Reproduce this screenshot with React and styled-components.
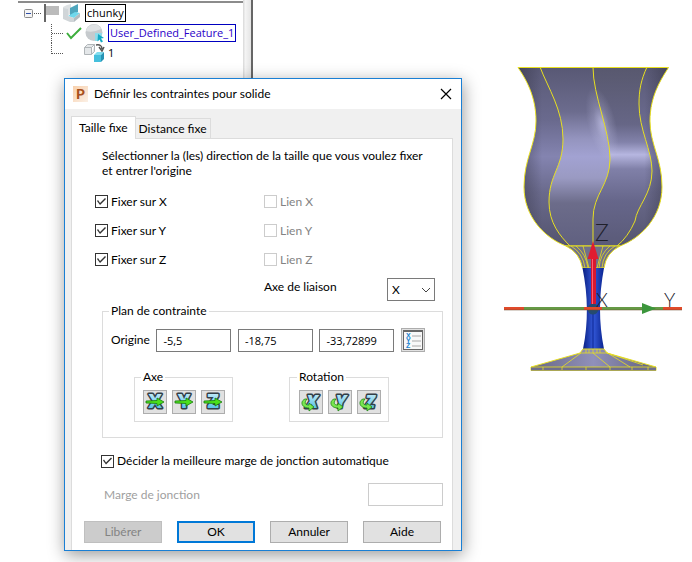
import React, { useState } from "react";
import styled, { createGlobalStyle } from "styled-components";

const GlobalStyle = createGlobalStyle`
  * {
    box-sizing: border-box;
  }
  body {
    margin: 0;
    background: #ffffff;
    color: #000000;
    font-family: Lato, "Open Sans", sans-serif;
    font-size: 12px;
    line-height: 16px;
  }
  button, input, select {
    font: inherit;
    color: inherit;
    margin: 0;
    border-radius: 0;
  }
  svg {
    flex: none;
  }
`;

const Desktop = styled.main`
  position: relative;
  display: flex;
  justify-content: space-between;
  align-items: flex-start;
  min-height: 100vh;
  overflow: hidden;
`;

/* ---------- tree ---------- */

const TreePane = styled.aside`
  display: flex;
  height: 100px;
  padding-left: 18px;
`;

const Tree = styled.ul`
  width: 225px;
  margin: 1px 0 0;
  padding: 0 0 0 6px;
  border-top: 2px solid #8c8c8c;
  font-family: "Open Sans", sans-serif;
  font-size: 11px;
  list-style: none;
`;

const TreeRow = styled.li`
  display: flex;
  align-items: center;
  height: 20px;
`;

const TreeLabel = styled.span`
  height: 18px;
  padding: 0 1px;
  margin-left: ${(props) => props.$gap || 4}px;
  border: 1px solid ${(props) => props.$color || "transparent"};
  color: ${(props) => props.$text || "#000000"};
  white-space: nowrap;
`;

const Splitter = styled.div`
  width: 10px;
  background: linear-gradient(90deg, #d8d8d8, #f4f4f4 30%, #e4e4e4);
  border-right: 2px solid #666666;
`;

/* ---------- dialog ---------- */

const Dialog = styled.section`
  position: absolute;
  left: 64px;
  top: 78px;
  width: 398px;
  background: #f0f0f0;
  border: 1px solid #1a7fd4;
  box-shadow: 1px 4px 16px rgba(0, 0, 0, 0.4);
`;

const TitleBar = styled.header`
  display: flex;
  align-items: center;
  height: 30px;
  padding: 0 9px 0 8px;
  background: #ffffff;
`;

const Title = styled.h1`
  flex: 1;
  margin: 0 0 0 6px;
  font-size: 12px;
  font-weight: 400;
`;

const CloseButton = styled.button`
  display: flex;
  padding: 0;
  border: none;
  background: none;
`;

const TabList = styled.div`
  display: flex;
  align-items: flex-end;
  padding: 7px 6px 0;
`;

const Tab = styled.button`
  height: ${(props) => (props.$active ? 23 : 20)}px;
  margin-bottom: ${(props) => (props.$active ? -1 : 0)}px;
  padding: ${(props) => (props.$active ? "0 7px" : "0 3px")};
  border: 1px solid #dcdcdc;
  border-bottom: none;
  border-left-width: ${(props) => (props.$active ? 1 : 0)}px;
  background: ${(props) => (props.$active ? "#ffffff" : "#f0f0f0")};
  white-space: nowrap;
`;

const Panel = styled.div`
  margin: 0 8px 0 6px;
  padding: 9px 9px 7px 30px;
  border: 1px solid #dcdcdc;
  border-bottom: none;
  background: #ffffff;
`;

const Intro = styled.p`
  margin: 0 0 9px;
  line-height: 15px;
  white-space: nowrap;
`;

const CheckGrid = styled.div`
  display: grid;
  grid-template-columns: 169px 1fr;
  grid-auto-rows: 29px;
  align-items: center;
  margin-left: -7px;
`;

const CheckLabel = styled.label`
  display: flex;
  align-items: center;
  gap: 3px;
  color: ${(props) => (props.$disabled ? "#838383" : "#000000")};
  white-space: nowrap;
`;

const CheckBox = styled.input`
  appearance: none;
  width: 13px;
  height: 13px;
  border: 1px solid #333333;
  background: #ffffff;

  &:checked::after {
    content: "";
    display: block;
    width: 11px;
    height: 11px;
    background: #333333;
    clip-path: polygon(1px 5px, 2px 4px, 4px 7px, 9px 2px, 10px 3px, 4px 9px);
  }
  &:disabled {
    border-color: #cccccc;
  }
`;

const LinkRow = styled.div`
  display: flex;
  justify-content: space-between;
  align-items: flex-start;
  margin: 4px 8px 2px 162px;
`;

const LinkLabel = styled.label`
  line-height: 18px;
`;

const SelectBox = styled.div`
  position: relative;
  display: flex;

  svg {
    position: absolute;
    right: 4px;
    top: 9px;
    pointer-events: none;
  }
`;

const Select = styled.select`
  appearance: none;
  width: 48px;
  height: 23px;
  padding: 0 4px;
  border: 1px solid #7a7a7a;
  background: #ffffff;
`;

const Group = styled.fieldset`
  min-width: 0;
  margin: 0;
  padding: ${(props) => props.$pad};
  border: 1px solid #dcdcdc;
`;

const Legend = styled.legend`
  margin-left: ${(props) => props.$indent || 0}px;
  padding: 0 2px;
`;

const OriginRow = styled.div`
  display: flex;
  align-items: center;
  justify-content: space-between;
`;

const TextInput = styled.input`
  width: 75px;
  height: 23px;
  padding: 0 6px;
  border: 1px solid #7a7a7a;
  background: #ffffff;
  font-family: "Open Sans", sans-serif;
  font-size: 11px;

  &:disabled {
    border-color: #cccccc;
  }
`;

const IconButton = styled.button`
  display: flex;
  align-items: center;
  justify-content: center;
  width: 24px;
  height: 24px;
  padding: 0;
  border: 1px solid #adadad;
  background: #e1e1e1;
`;

const GroupRow = styled.div`
  display: flex;
  justify-content: space-between;
  padding: 17px 36px 0 23px;
`;

const ButtonSet = styled.div`
  display: flex;
  gap: 5px;
`;

const AutoMargin = styled.div`
  margin: 15px 0 14px -1px;
`;

const MarginRow = styled.div`
  display: flex;
  align-items: center;
  justify-content: space-between;
  padding-left: 2px;
  color: #a0a0a0;
`;

const Footer = styled.footer`
  display: flex;
  gap: 15px;
  margin: 15px 0 0 -18px;
`;

const PushButton = styled.button`
  width: 78px;
  height: 22px;
  padding: 0;
  border: ${(props) => (props.$primary ? "2px solid #0078d7" : "1px solid #adadad")};
  background: #e1e1e1;

  &:disabled {
    border-color: #bfbfbf;
    background: #cccccc;
    color: #838383;
  }
`;

/* ---------- 3D view ---------- */

const Viewport = styled.div`
  display: flex;
  justify-content: flex-end;
  flex: 1;
  padding-top: 60px;
`;

/* ---------- tree icons ---------- */

const dots = { stroke: "#555555", strokeDasharray: "1 1" };

const RootBranch = () => (
  <svg width="57" height="20">
    <rect x="0.5" y="6.5" width="8" height="8" rx="1" fill="#f4f4f4" stroke="#8a8a8a" />
    <path d="M2 10.5h5" stroke="#2f4fa8" />
    <path d="M10 10.5h8" {...dots} />
    <path d="M20 1h2v18h-2z" fill="#666666" />
    <path d="M22 3h13v9h-13z" fill="#bbbbbb" />
    <path d="M39 4l4-2 4-1v9l-3 3-5 2z" fill="#dde1e3" />
    <path d="M46 5l8-4v8l-8 4z" fill="#4fa6bd" />
    <path d="M44 13l7-4 5 1-6 5z" fill="#6fd8ec" />
    <path d="M39 5l5 1v7l6 2v4h-4l-7-3z" fill="#d0d5d8" />
    <path d="M50 15l6-5v4l-6 5z" fill="#b4bcc0" />
  </svg>
);

const FeatureBranch = () => (
  <svg width="80" height="20">
    <path d="M27.5 1v19M28 10.5h12" {...dots} fill="none" />
    <path d="M43 10l4 5L57 5" fill="none" stroke="#3dae3d" strokeWidth="2" />
    <circle cx="70" cy="9.5" r="8.5" fill="#c6cacd" />
    <path d="M62 8a8 8 0 0 1 15-2q-8 4-15 2z" fill="#dfe2e4" />
    <path d="M71 10h7l-1 5-3 3h-3z" fill="#8fdcea" />
    <path d="M74 11l6 4-3 .5 2 3-2 1-1.5-3-2 2z" fill="#12a9c4" />
  </svg>
);

const CopyBranch = () => (
  <svg width="81" height="20">
    <path d="M27.5 0v11M28 10.5h12" {...dots} fill="none" />
    <path d="M60.5 4.5h7v7h-7zM60.5 4.5l3-3h7l-3 3M67.5 11.5l3-3v-7" fill="#e4e7e9" stroke="#b0b5b8" />
    <path d="M72 2q6-1 6 4M75 4l3 4 2-4" fill="none" stroke="#555555" strokeWidth="1.5" />
    <path d="M70 12l3-3h7l-3 3z" fill="#7fdcee" />
    <path d="M70 12h7v7h-7z" fill="#45bfdc" />
    <path d="M77 12l3-3v7l-3 3z" fill="#2793b4" />
  </svg>
);

/* ---------- dialog icons ---------- */

const AppIcon = () => (
  <svg width="15" height="16">
    <defs>
      <linearGradient id="logo" x2="1" y2="1">
        <stop offset="0" stopColor="#f8d0ac" />
        <stop offset="1" stopColor="#fbf0e6" />
      </linearGradient>
    </defs>
    <rect width="15" height="16" fill="url(#logo)" />
    <text x="3" y="13" fontFamily="Lato" fontWeight="900" fontSize="14" fill="#a8501c">
      P
    </text>
  </svg>
);

const letterStyle = {
  fontFamily: "Open Sans",
  fontWeight: 800,
  fontSize: 19,
  textAnchor: "middle",
  fill: "url(#ice)",
  stroke: "#333f48",
  strokeWidth: 3,
  strokeLinejoin: "round",
  paintOrder: "stroke",
};

const AxisIcon = ({ axis }) => (
  <svg width="22" height="22" overflow="visible">
    <text x="11" y="17" {...letterStyle}>
      {axis}
    </text>
    <path d="M2 10l11-.5V7l7 4-7 4v-2.500L2 12z" fill="#4be01c" stroke="#16780c" strokeWidth="0.8" />
  </svg>
);

const RotationIcon = ({ axis }) => (
  <svg width="22" height="22" overflow="visible">
    <text x="12" y="17" {...letterStyle} fontSize="18" fontStyle="italic">
      {axis}
    </text>
    <path
      d="M5 8c-5 2-4 9 4 9v3l5-4-5-4v2c-4 0-5-2-2-6z"
      fill="#7be650"
      stroke="#1c8412"
      strokeWidth="0.8"
    />
  </svg>
);

const CoordinatesIcon = () => (
  <svg width="22" height="22">
    <rect x="1.5" y="1.5" width="19" height="19" fill="#f8f8f8" stroke="#666666" />
    <path d="M1 1h20v2H1z" fill="#666666" />
    <path d="M10 7h9M10 12h9M10 17h9" stroke="#d0d0d0" strokeWidth="2" />
    <g fontFamily="Liberation Sans" fontWeight="700" fontSize="7" fill="#1a84d0">
      <text x="4" y="9">X</text>
      <text x="4" y="14">Y</text>
      <text x="4" y="19">Z</text>
    </g>
  </svg>
);

/* ---------- glass ---------- */

const bowl =
  "M518 67.5C525 78 536 95 536 121C536 145 524 158 524 187C524 217 545 238 566 246H620C641 238 662 217 662 187C662 158 650 145 650 121C650 95 662 78 668.5 67.5Z";
const seamLeft = "C548 88 563 110 563 139C563 168 549 174 549 202C549 223 560 236 570 246";
const seamMid = "C593 96 610 130 610 159C610 185 593 194 593 219V246";
const seamRight = "C641 80 639 90 639 104C639 130 652 150 652 171C652 194 637 206 635 221Q628 237 617 246";

const Glass = () => (
  <svg width="196" height="320" viewBox="496 60 196 320">
    <defs>
      <linearGradient id="ice" x2="0" y2="1">
        <stop offset="0" stopColor="#e4f8ff" />
        <stop offset="1" stopColor="#2fb4e0" />
      </linearGradient>
      <linearGradient id="side" gradientUnits="userSpaceOnUse" x1="0" x2="0" y1="67" y2="246">
        <stop offset="0" stopColor="#5a5a76" />
        <stop offset="0.3" stopColor="#6a6a8e" />
        <stop offset="0.5" stopColor="#8484b0" />
        <stop offset="0.7" stopColor="#6a6a8c" />
        <stop offset="1" stopColor="#54546e" />
      </linearGradient>
      <linearGradient id="front" gradientUnits="userSpaceOnUse" x1="0" x2="0" y1="67" y2="246">
        <stop offset="0" stopColor="#585874" />
        <stop offset="0.25" stopColor="#6c6c8e" />
        <stop offset="0.4" stopColor="#9494be" />
        <stop offset="0.5" stopColor="#a2a2d2" />
        <stop offset="0.62" stopColor="#9a9ac2" />
        <stop offset="0.76" stopColor="#6c6c8a" />
        <stop offset="1" stopColor="#606080" />
      </linearGradient>
      <linearGradient id="flank" gradientUnits="userSpaceOnUse" x1="0" x2="0" y1="67" y2="246">
        <stop offset="0" stopColor="#58586e" />
        <stop offset="0.32" stopColor="#666686" />
        <stop offset="0.42" stopColor="#8282aa" />
        <stop offset="0.49" stopColor="#b6b6e0" />
        <stop offset="0.57" stopColor="#8080a8" />
        <stop offset="0.75" stopColor="#66668a" />
        <stop offset="1" stopColor="#5a5a78" />
      </linearGradient>
      <linearGradient id="edge">
        <stop offset="0" stopColor="#303040" stopOpacity="0.5" />
        <stop offset="0.16" stopColor="#303040" stopOpacity="0" />
        <stop offset="0.84" stopColor="#303040" stopOpacity="0" />
        <stop offset="1" stopColor="#303040" stopOpacity="0.5" />
      </linearGradient>
      <radialGradient id="shine">
        <stop offset="0" stopColor="#d0d0f4" stopOpacity="0.6" />
        <stop offset="0.5" stopColor="#d0d0f4" stopOpacity="0.2" />
        <stop offset="1" stopColor="#d0d0f4" stopOpacity="0" />
      </radialGradient>
      <linearGradient id="stem">
        <stop offset="0" stopColor="#081e80" />
        <stop offset="0.5" stopColor="#3358d8" />
        <stop offset="1" stopColor="#0a2490" />
      </linearGradient>
      <linearGradient id="foot">
        <stop offset="0" stopColor="#686884" />
        <stop offset="0.5" stopColor="#9090ba" />
        <stop offset="1" stopColor="#62627e" />
      </linearGradient>
      <clipPath id="bowl">
        <path d={bowl} />
      </clipPath>
    </defs>

    <g clipPath="url(#bowl)">
      <path d={bowl} fill="url(#side)" />
      <path d={`M593 67${seamMid}H680V67Z`} fill="url(#flank)" />
      <path d={`M540 67${seamLeft}H593V219C593 194 610 185 610 159C610 130 593 96 593 67Z`} fill="url(#front)" />
      <path d={`M647 67${seamRight}H680V67Z`} fill="url(#side)" />
      <ellipse cx="602" cy="124" rx="14" ry="38" fill="url(#shine)" transform="rotate(-14 602 124)" />
      <path d={bowl} fill="url(#edge)" />
    </g>
    <g fill="none" stroke="#e8e020">
      <path d={bowl} />
      <path d={`M540 67${seamLeft}M593 67${seamMid}M647 67${seamRight}`} />
    </g>

    <path d="M566 246Q580 253 582.5 268H604Q606 253 620 246Z" fill="#70708a" stroke="#e8e020" />
    <path
      d="M571 246Q583 253 585 268M576 246Q586 254 588 268M583 246L589 268M603 246L597 268M610 246Q600 254 599 268M615 246Q603 253 602 268"
      fill="none"
      stroke="#e8e020"
      strokeWidth="0.8"
    />
    <path d="M582.5 268H604Q596 310 604 349H583Q591 310 582.5 268Z" fill="url(#stem)" />
    <path d="M593 310v39" stroke="#0a2490" />

    <path d="M583 349H604L607 353L656 367V370.5H531V367L580 353Z" fill="url(#foot)" stroke="#e8e020" />
    <path d="M531 367H656V370.5H531Z" fill="#6e6e8c" />
    <path
      d="M531 367H656M580 353H607M593 349V353L610 367M581 353L562 367M607 353L643 365M606 352L630 367M586 349V353M589 349V353M597 349V353M600 349V353M543 367V370M562 367V370M586 367V370M610 367V370M632 367V370M648 367V370"
      fill="none"
      stroke="#e8e020"
      strokeWidth="0.8"
    />

    <circle cx="593" cy="309" r="5.5" fill="#254b70" />
    <path d="M504 307h178v3H504z" fill="#659a45" />
    <path d="M504 307h20v3h-20zM584 307h18v3h-18zM663 307h19v3h-19z" fill="#e04a2a" />
    <path d="M504 310h178" stroke="#6b4a2c" strokeWidth="0.5" />
    <path d="M642 303l14 5.5-14 5.5z" fill="#3c963c" />
    <path d="M591 258h5v46h-5z" fill="#d81830" />
    <path d="M592 258h1v46h-1z" fill="#ff6070" />
    <path d="M593 241l5.5 18h-11z" fill="#e01c30" />
    <g fontFamily="Lato" fontWeight="300" fill="#20202a">
      <text x="595" y="241" fontSize="23">Z</text>
      <text x="596" y="307" fontSize="19">X</text>
      <text x="664" y="307" fontSize="19">Y</text>
    </g>
  </svg>
);

const AXES = ["X", "Y", "Z"];

const App = () => {
  const [axis, setAxis] = useState("X");

  return (
    <>
      <GlobalStyle />
      <Desktop>
        <TreePane>
          <Tree>
            <TreeRow>
              <RootBranch />
              <TreeLabel $color="#000000">chunky</TreeLabel>
            </TreeRow>
            <TreeRow>
              <FeatureBranch />
              <TreeLabel $color="#0000c0" $text="#2a00c8">
                User_Defined_Feature_1
              </TreeLabel>
            </TreeRow>
            <TreeRow>
              <CopyBranch />
              <TreeLabel $gap={1}>1</TreeLabel>
            </TreeRow>
          </Tree>
          <Splitter />
        </TreePane>

        <Viewport>
          <Glass />
        </Viewport>

        <Dialog role="dialog" aria-labelledby="dialog-title">
          <TitleBar>
            <AppIcon />
            <Title id="dialog-title">Définir les contraintes pour solide</Title>
            <CloseButton aria-label="Fermer">
              <svg width="12" height="12">
                <path d="M1 1l10 10M11 1L1 11" stroke="#000000" strokeWidth="1.2" />
              </svg>
            </CloseButton>
          </TitleBar>

          <TabList role="tablist">
            <Tab role="tab" aria-selected="true" $active>
              Taille fixe
            </Tab>
            <Tab role="tab" aria-selected="false">
              Distance fixe
            </Tab>
          </TabList>

          <Panel role="tabpanel">
            <Intro>
              Sélectionner la (les) direction de la taille que vous voulez fixer
              <br />
              et entrer l'origine
            </Intro>

            <CheckGrid>
              {AXES.map((name) => (
                <React.Fragment key={name}>
                  <CheckLabel>
                    <CheckBox type="checkbox" defaultChecked />
                    Fixer sur {name}
                  </CheckLabel>
                  <CheckLabel $disabled>
                    <CheckBox type="checkbox" disabled />
                    Lien {name}
                  </CheckLabel>
                </React.Fragment>
              ))}
            </CheckGrid>

            <LinkRow>
              <LinkLabel htmlFor="link-axis">Axe de liaison</LinkLabel>
              <SelectBox>
                <Select id="link-axis" value={axis} onChange={(e) => setAxis(e.target.value)}>
                  {AXES.map((name) => (
                    <option key={name}>{name}</option>
                  ))}
                </Select>
                <svg width="10" height="6">
                  <path d="M1 1l4 4 4-4" fill="none" stroke="#444444" />
                </svg>
              </SelectBox>
            </LinkRow>

            <Group $pad="9px 17px 15px 8px">
              <Legend $indent={-2}>Plan de contrainte</Legend>
              <OriginRow>
                <label htmlFor="origin-x">Origine</label>
                <TextInput id="origin-x" defaultValue="-5,5" />
                <TextInput aria-label="Origine Y" defaultValue="-18,75" />
                <TextInput aria-label="Origine Z" defaultValue="-33,72899" />
                <IconButton aria-label="Coordonnées">
                  <CoordinatesIcon />
                </IconButton>
              </OriginRow>
              <GroupRow>
                <Group $pad="5px 7px 7px 8px">
                  <Legend $indent={-2}>Axe</Legend>
                  <ButtonSet>
                    {AXES.map((name) => (
                      <IconButton key={name} aria-label={`Axe ${name}`}>
                        <AxisIcon axis={name} />
                      </IconButton>
                    ))}
                  </ButtonSet>
                </Group>
                <Group $pad="5px 7px 7px 9px">
                  <Legend $indent={-2}>Rotation</Legend>
                  <ButtonSet>
                    {AXES.map((name) => (
                      <IconButton key={name} aria-label={`Rotation ${name}`}>
                        <RotationIcon axis={name} />
                      </IconButton>
                    ))}
                  </ButtonSet>
                </Group>
              </GroupRow>
            </Group>

            <AutoMargin>
              <CheckLabel>
                <CheckBox type="checkbox" defaultChecked />
                Décider la meilleure marge de jonction automatique
              </CheckLabel>
            </AutoMargin>

            <MarginRow>
              <label htmlFor="join-margin">Marge de jonction</label>
              <TextInput id="join-margin" disabled />
            </MarginRow>

            <Footer>
              <PushButton disabled>Libérer</PushButton>
              <PushButton $primary>OK</PushButton>
              <PushButton>Annuler</PushButton>
              <PushButton>Aide</PushButton>
            </Footer>
          </Panel>
        </Dialog>
      </Desktop>
    </>
  );
};

export default App;
